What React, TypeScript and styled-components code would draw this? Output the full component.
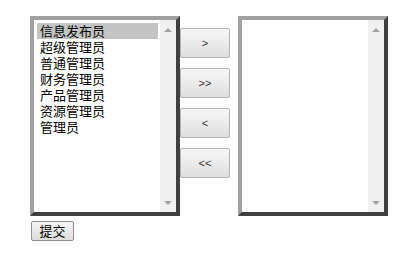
import styled, { createGlobalStyle } from "styled-components";

const GlobalStyle = createGlobalStyle`
    body {
        margin: 0;
        background: #ffffff;
        font-family: "Noto Sans CJK SC", "Liberation Sans", sans-serif;
    }
`;

const Page = styled.div`
    padding: 16px 30px;
`;

const Picker = styled.div`
    display: flex;
    align-items: flex-start;
`;

const ListBox = styled.div`
    box-sizing: border-box;
    width: 150px;
    height: 200px;
    border: 4px solid;
    border-color: #a0a0a0 #404040 #404040 #a0a0a0;
    background: #ffffff;
    display: flex;
`;

const Items = styled.ul`
    flex: 1;
    margin: 0;
    padding: 3px 2px 0 3px;
    list-style: none;
`;

const Item = styled.li<{ $selected?: boolean }>`
    height: 16px;
    line-height: 16px;
    padding-left: 3px;
    font-size: 13px;
    color: #000000;
    white-space: nowrap;
    background: ${props => props.$selected ? "#c4c4c4" : "transparent"};
`;

const ScrollTrack = styled.div`
    width: 16px;
    background: #f0f0f0;
    display: flex;
    flex-direction: column;
    justify-content: space-between;
    align-items: center;
    padding: 8px 0 7px;
    box-sizing: border-box;
`;

const Arrow = styled.div<{ $down?: boolean }>`
    width: 0;
    height: 0;
    border-left: 4px solid transparent;
    border-right: 4px solid transparent;
    ${props => props.$down
        ? "border-top: 4px solid #a3a3a3;"
        : "border-bottom: 4px solid #a3a3a3;"}
`;

const Actions = styled.div`
    display: flex;
    flex-direction: column;
    gap: 10px;
    padding-top: 12px;
    margin-right: 8px;
`;

const MoveButton = styled.button`
    box-sizing: border-box;
    width: 50px;
    height: 30px;
    border: 1px solid #b4b4b4;
    border-radius: 2px;
    background: linear-gradient(#f7f7f7, #dedede);
    color: #333333;
    font-family: "Liberation Sans", sans-serif;
    font-size: 11px;
    padding: 0;
`;

const SubmitButton = styled.button`
    box-sizing: border-box;
    margin: 5px 0 0 1px;
    width: 43px;
    height: 20px;
    border: 1px solid #8f8f8f;
    border-radius: 2px;
    background: linear-gradient(#f6f6f6, #dcdcdc);
    color: #000000;
    font-family: "Noto Sans CJK SC", sans-serif;
    font-size: 13px;
    line-height: 16px;
    padding: 0;
`;

const roles = ["信息发布员", "超级管理员", "普通管理员", "财务管理员", "产品管理员", "资源管理员", "管理员"];

function App() {
    return (
        <Page>
            <GlobalStyle />
            <Picker>
                <ListBox>
                    <Items>
                        {roles.map((r, i) => <Item key={r} $selected={i === 0}>{r}</Item>)}
                    </Items>
                    <ScrollTrack>
                        <Arrow />
                        <Arrow $down />
                    </ScrollTrack>
                </ListBox>
                <Actions>
                    <MoveButton>&gt;</MoveButton>
                    <MoveButton>&gt;&gt;</MoveButton>
                    <MoveButton>&lt;</MoveButton>
                    <MoveButton>&lt;&lt;</MoveButton>
                </Actions>
                <ListBox>
                    <Items />
                    <ScrollTrack>
                        <Arrow />
                        <Arrow $down />
                    </ScrollTrack>
                </ListBox>
            </Picker>
            <SubmitButton>提交</SubmitButton>
        </Page>
    );
}

export default App;
